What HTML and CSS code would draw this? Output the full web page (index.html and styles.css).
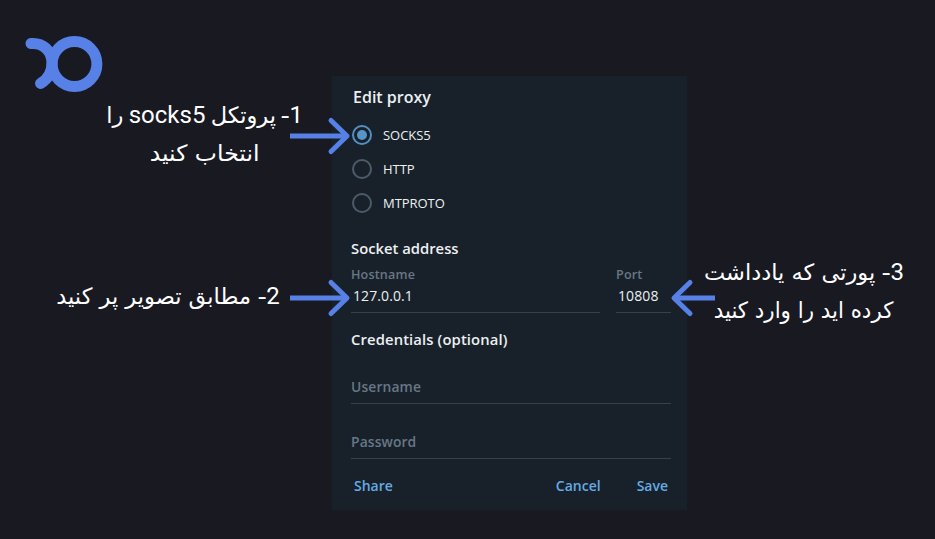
FILE: index.html
```
<!DOCTYPE html>
<html lang="fa">
<head>
<meta charset="utf-8">
<title>Edit proxy</title>
<link rel="stylesheet" href="styles.css">
</head>
<body>
<main class="scene">
  <section class="side left">
    <svg class="logo" width="82" height="64" viewBox="0 0 82 64" aria-hidden="true">
      <circle cx="54.5" cy="32" r="22.4"/>
      <path d="M11 11.5C23 10.5 32 19 32 31C32 41 28 47 20.5 51.5"/>
    </svg>
    <div class="note first" dir="rtl">
      <p><span class="fit a"><b>1</b><i>-</i> پروتکل <b>socks5</b> را</span></p>
      <p><span class="fit b">انتخاب کنید</span></p>
    </div>
    <div class="note second" dir="rtl">
      <p><span class="fit c"><b>2</b><i>-</i> مطابق تصویر پر کنید</span></p>
    </div>
  </section>
  <section class="panel" lang="en">
    <h1>Edit proxy</h1>
    <div class="options">
      <div class="option"><span class="radio on"></span><span>SOCKS5</span></div>
      <div class="option"><span class="radio"></span><span>HTTP</span></div>
      <div class="option"><span class="radio"></span><span>MTPROTO</span></div>
    </div>
    <h2 class="address">Socket address</h2>
    <div class="pair">
      <div class="field host"><label>Hostname</label><div class="value">127.0.0.1</div></div>
      <div class="field port"><label>Port</label><div class="value">10808</div></div>
    </div>
    <h2 class="cred">Credentials (optional)</h2>
    <div class="entry user">Username</div>
    <div class="entry pass">Password</div>
    <div class="actions"><span>Share</span><span class="cancel">Cancel</span><span class="save">Save</span></div>
    <svg class="arrow one" width="62" height="40" viewBox="0 0 62 40"><path class="shaft" d="M0 20H56"/><path d="M41 4.5L57 20L41 35.5"/></svg>
    <svg class="arrow two" width="62" height="40" viewBox="0 0 62 40"><path class="shaft" d="M0 20H56"/><path d="M41 4.5L57 20L41 35.5"/></svg>
    <svg class="arrow three" width="46" height="40" viewBox="0 0 46 40"><path class="shaft" d="M4 20H45"/><path d="M20 4.5L4 20L20 35.5"/></svg>
  </section>
  <section class="side right">
    <div class="note third" dir="rtl">
      <p><span class="fit d"><b>3</b><i>-</i> پورتی که یادداشت</span></p>
      <p><span class="fit e">کرده اید را وارد کنید</span></p>
    </div>
  </section>
</main>
</body>
</html>
```
FILE: styles.css
```
* { box-sizing: border-box; }
body { margin: 0; background: #191922; }
.scene { width: 935px; height: 539px; overflow: hidden; display: grid; grid-template-columns: 332px 355px 248px; }
.side { display: flex; flex-direction: column; }
.logo { margin: 32px 0 0 20px; flex: none; overflow: visible; }
.logo circle, .logo path { fill: none; stroke: #5781e7; stroke-width: 11; stroke-linecap: round; }
.note { color: #fff; font: 22.5px/38px "DejaVu Sans", sans-serif; text-align: center; }
.note p { margin: 0; height: 38px; }
.note b { font: 24px/30px Roboto, sans-serif; }
.note i { display: inline-block; font-style: normal; transform: scaleX(1.15); }
.fit { display: inline-block; white-space: nowrap; }
.a { word-spacing: -1.8px; }
.b { transform: scaleX(1.045); }
.e { transform: scaleX(0.95); }
.first { width: 196px; margin: 0 0 0 107px; }
.second { width: 224px; margin: 105px 0 0 56px; }
.third { width: 200px; margin: 253px 0 0 17px; }
.panel { position: relative; margin-top: 76px; height: 434px; padding: 9px 16px 0 19px; background: #18212a; color: #ecf0f2; font: 14px/20px "Open Sans", sans-serif; }
h1, h2 { margin: 0; font-weight: 600; }
h1 { padding-left: 2px; font-size: 16px; line-height: 24px; }
h2 { font-size: 14.8px; line-height: 22px; }
.options { margin-top: 9px; }
.option { display: flex; align-items: center; gap: 11px; height: 34px; padding-left: 1px; font-size: 13px; }
.option span:last-child { letter-spacing: -0.05px; }
.radio { width: 20px; height: 20px; display: grid; place-items: center; border: 2px solid #4d5b69; border-radius: 50%; }
.radio.on { border-color: #5290c4; }
.on::after { content: ""; width: 10px; height: 10px; border-radius: 50%; background: #5794c9; }
.address { margin-top: 17px; }
.pair { display: grid; grid-template-columns: 249px 55px; gap: 16px; margin-top: 6px; }
.field { height: 48px; border-bottom: 1px solid #35414b; }
.field label { display: block; font-size: 12.6px; line-height: 19px; font-weight: 600; letter-spacing: 0.15px; color: #687785; }
.value { padding-left: 2px; line-height: 23px; letter-spacing: 0.1px; }
.cred { margin-top: 15px; letter-spacing: 0.12px; }
.entry { height: 28px; line-height: 22px; border-bottom: 1px solid #35414b; color: #687785; font-size: 13.9px; font-weight: 600; letter-spacing: 0.1px; }
.user { margin-top: 26px; }
.pass { margin-top: 27px; }
.actions { display: flex; margin-top: 16px; padding: 0 3px; font-size: 14px; line-height: 22px; font-weight: 600; color: #65abe3; }
.cancel { margin-left: auto; }
.save { margin-left: 36px; }
.arrow { position: absolute; overflow: visible; fill: none; stroke: #5781e7; stroke-width: 5; stroke-linecap: round; stroke-linejoin: round; }
.arrow .shaft { stroke-linecap: butt; }
.one { left: -42px; top: 40px; }
.two { left: -42px; top: 202px; }
.three { left: 338px; top: 202px; z-index: 1; }
```
